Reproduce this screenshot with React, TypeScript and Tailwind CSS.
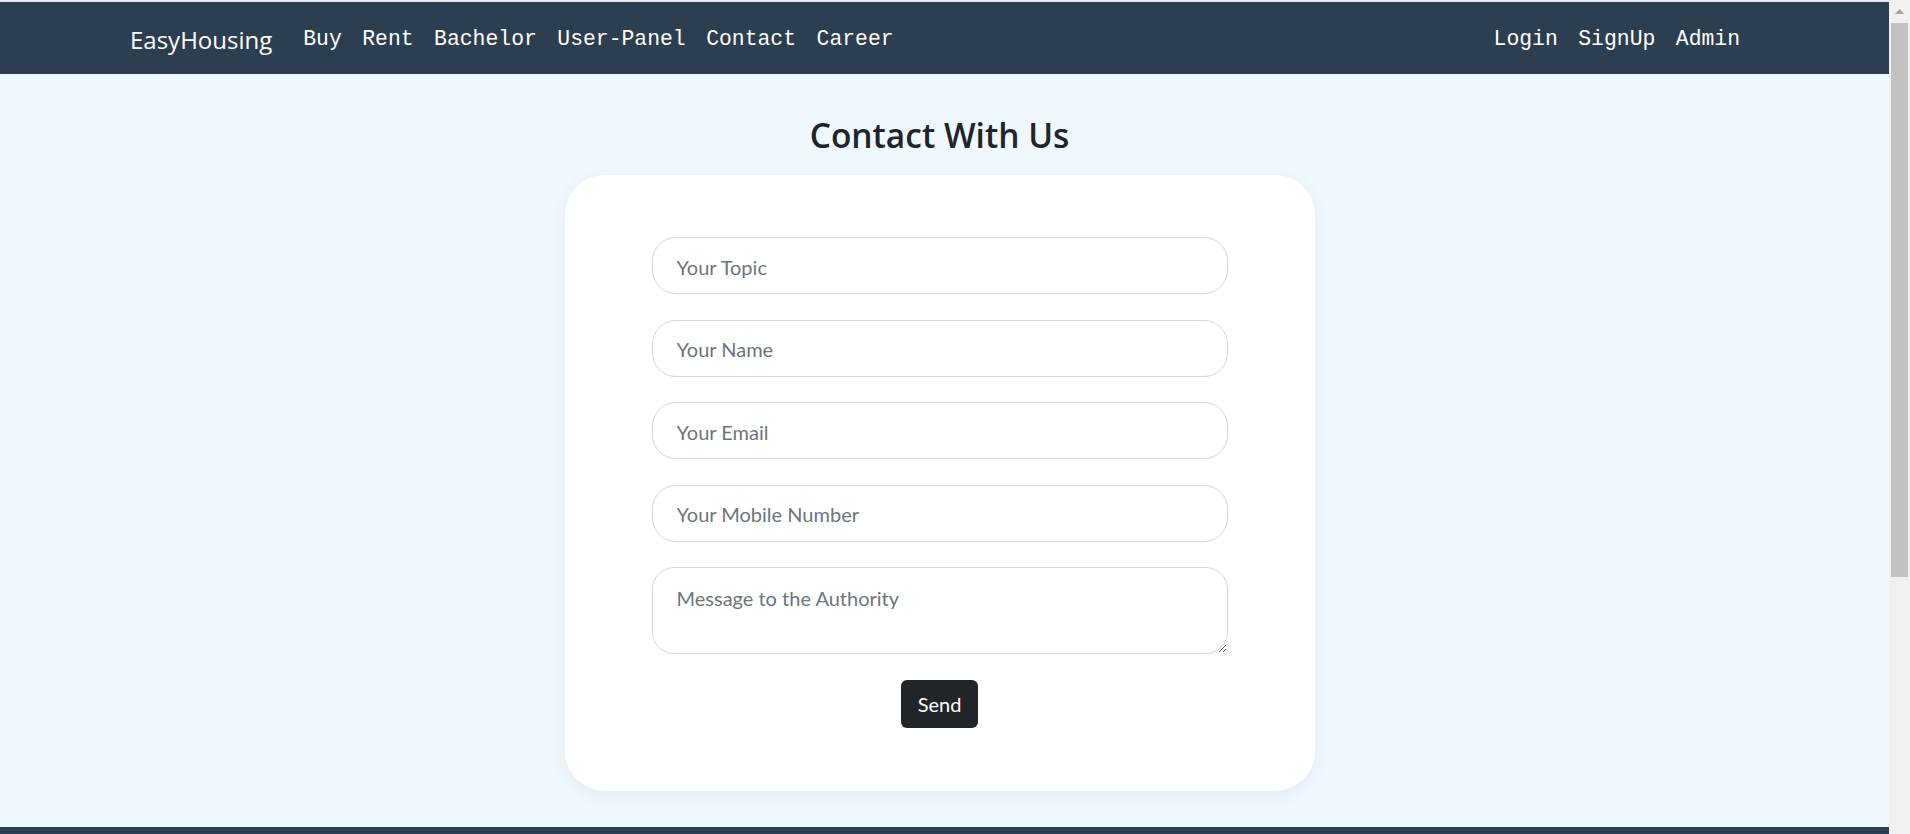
import React from "react"

const leftLinks = ["Buy", "Rent", "Bachelor", "User-Panel", "Contact", "Career"]
const rightLinks = ["Login", "SignUp", "Admin"]

const fields = ["Your Topic", "Your Name", "Your Email", "Your Mobile Number"]

function Navbar() {
  return (
    <nav className="flex h-[72px] items-center justify-between bg-[#2c3e50] pl-[130px] pr-[149px] text-white">
      <div className="flex items-center">
        <a href="#" className="mt-[3px] mr-[31px] font-['Open_Sans',sans-serif] text-[24px] leading-none">
          EasyHousing
        </a>
        <ul className="mt-[4px] flex items-center gap-[20.5px] font-['Liberation_Mono',monospace] text-[21.4px] leading-none">
          {leftLinks.map((l) => (
            <li key={l}>
              <a href="#">{l}</a>
            </li>
          ))}
        </ul>
      </div>
      <ul className="mt-[4px] flex items-center gap-[20.5px] font-['Liberation_Mono',monospace] text-[21.4px] leading-none">
        {rightLinks.map((l) => (
          <li key={l}>
            <a href="#">{l}</a>
          </li>
        ))}
      </ul>
    </nav>
  )
}

function ContactForm() {
  return (
    <form className="flex w-[750px] flex-col items-center gap-[25.6px] rounded-[40px] bg-white px-[87px] pt-[62px] pb-[63px] shadow-[0_4px_18px_rgba(0,0,0,0.06)]">
      {fields.map((f) => (
        <input
          key={f}
          type="text"
          placeholder={f}
          className="h-[57px] w-full rounded-[24px] border border-[#d6d6d6] bg-white px-[24px] pt-[2px] font-['Lato',sans-serif] text-[20px] text-[#212529] outline-none placeholder:text-[#6c757d]"
        />
      ))}
      <textarea
        placeholder="Message to the Authority"
        className="h-[87px] w-full rounded-[22px] border border-[#d6d6d6] bg-white px-[24px] pt-[15px] font-['Lato',sans-serif] text-[20px] leading-[30px] text-[#212529] outline-none placeholder:text-[#6c757d]"
      />
      <button
        type="button"
        className="h-[48px] w-[77px] rounded-[6px] bg-[#212529] font-['Lato',sans-serif] text-[20px] text-white"
      >
        Send
      </button>
    </form>
  )
}

function Scrollbar() {
  return (
    <div className="flex w-[21px] shrink-0 flex-col bg-[#f0f0f0]">
      <div className="flex h-[23px] items-center justify-center">
        <svg width="9" height="5" viewBox="0 0 9 5">
          <polygon points="0,5 4.5,0 9,5" fill="#a3a3a3" />
        </svg>
      </div>
      <div className="mx-[2px] h-[554px] bg-[#c1c1c1]" />
    </div>
  )
}

export default function App() {
  return (
    <div className="flex h-[834px] w-full overflow-hidden bg-[#f0f8ff]">
      <div className="flex min-w-0 flex-1 flex-col">
        <div className="h-[2px] bg-[#e3e6ea]" />
        <Navbar />
        <main className="flex flex-1 flex-col items-center pr-[10px]">
          <h1 className="mt-[40px] mb-[19px] font-['Open_Sans',sans-serif] text-[33.5px] leading-[42px] font-semibold text-[#212529]">
            Contact With Us
          </h1>
          <ContactForm />
        </main>
        <footer className="h-[7px] bg-[#2c3e50]" />
      </div>
      <Scrollbar />
    </div>
  )
}
